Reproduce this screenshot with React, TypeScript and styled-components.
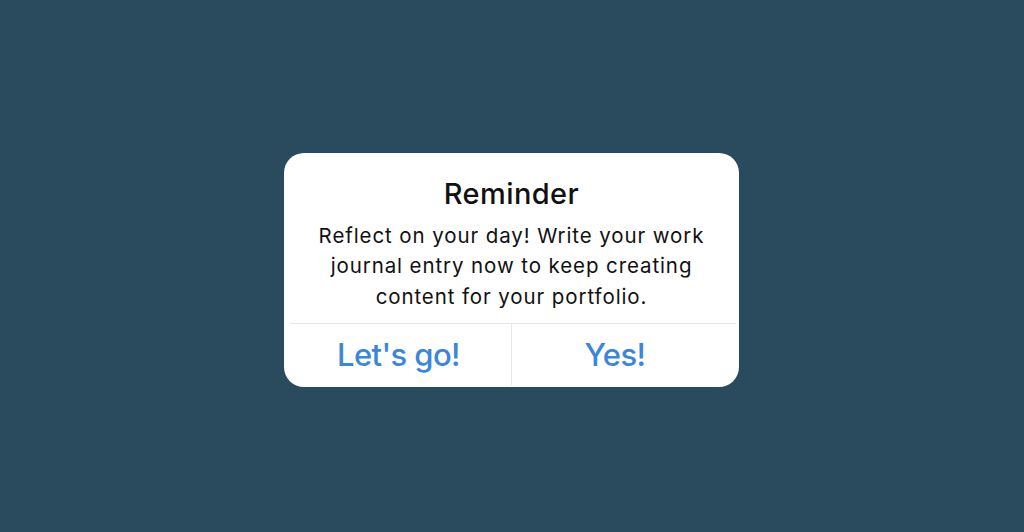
import React from "react";
import styled, { createGlobalStyle } from "styled-components";

const Global = createGlobalStyle`
  html, body { margin: 0; padding: 0; }
  body { background: #2a4a5d; font-family: "Inter", "Liberation Sans", sans-serif; }
`;

const Page = styled.div`
  width: 1024px;
  height: 532px;
  display: flex;
  align-items: flex-start;
  justify-content: center;
  padding-top: 153px;
  box-sizing: border-box;
`;

const Card = styled.div`
  width: 455px;
  height: 234px;
  margin-right: 1px;
  background: #ffffff;
  border-radius: 20px;
  display: flex;
  flex-direction: column;
  overflow: hidden;
`;

const Body = styled.div`
  height: 170px;
  box-sizing: border-box;
  padding-top: 21.5px;
  display: flex;
  flex-direction: column;
  align-items: center;
`;

const Title = styled.div`
  font-size: 29px;
  font-weight: 500;
  letter-spacing: 0.4px;
  color: #111;
  line-height: 38px;
`;

const Message = styled.div`
  font-size: 20.5px;
  letter-spacing: 0.9px;
  color: #111;
  line-height: 30.5px;
  text-align: center;
  margin-top: 8px;
`;

const Actions = styled.div`
  flex: 1;
  margin: 0 3px 0 6px;
  border-top: 1px solid #e6e6e6;
  display: grid;
  grid-template-columns: 221px 1fr;
`;

const Action = styled.button<{ $divider?: boolean; $shift?: number }>`
  background: none;
  border: none;
  border-left: ${(p) => (p.$divider ? "1.5px solid #e6e6e6" : "none")};
  margin-bottom: 2px;
  color: #3b86d8;
  font-family: inherit;
  font-size: 31px;
  letter-spacing: -0.6px;
  font-weight: 500;
  padding: 0 ${(p) => p.$shift ?? 0}px 0 0;
  cursor: pointer;
`;

export default function App() {
  return (
    <>
      <Global />
      <Page>
        <Card>
          <Body>
            <Title>Reminder</Title>
            <Message>
              Reflect on your day! Write your work
              <br />
              journal entry now to keep creating
              <br />
              content for your portfolio.
            </Message>
          </Body>
          <Actions>
            <Action $shift={4}>Let's go!</Action>
            <Action $divider $shift={18}>Yes!</Action>
          </Actions>
        </Card>
      </Page>
    </>
  );
}
